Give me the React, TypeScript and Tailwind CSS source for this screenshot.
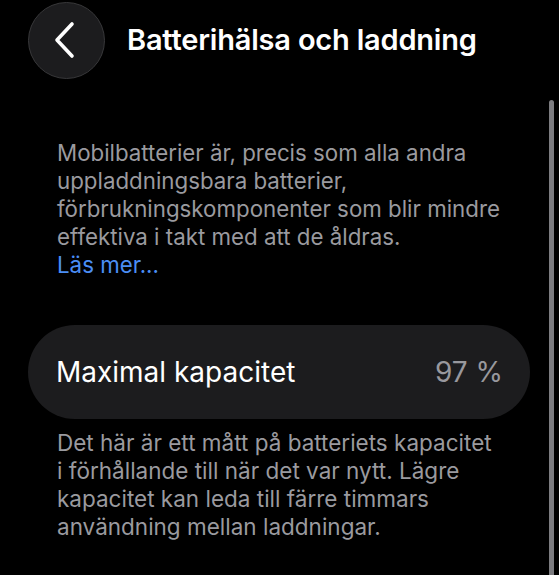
export default function App() {
  return (
    <div
      className="relative h-[575px] w-[559px] overflow-hidden bg-black text-white"
      style={{ fontFamily: 'Inter, "Noto Sans", sans-serif' }}
    >
      {/* header */}
      <div className="flex h-[80px] items-center pl-[28px]">
        <button className="flex h-[77px] w-[77px] items-center justify-center rounded-full border border-[#38383a] bg-[#1c1c1e]">
          <svg width="24" height="38" viewBox="0 0 24 38" fill="none" className="-ml-[4px]">
            <path d="M19 3 L4 19 L19 35" stroke="white" strokeWidth="3.6" strokeLinecap="round" strokeLinejoin="round" />
          </svg>
        </button>
        <h1 className="ml-[22px] text-[29px] font-semibold tracking-[-0.2px]">Batterihälsa och laddning</h1>
      </div>

      {/* scroll indicator */}
      <div className="absolute right-[5px] top-[100px] h-[490px] w-[5px] rounded-full bg-[#7c7c80]" />

      <div className="mt-[59px] whitespace-nowrap px-[57px] text-[22.3px] leading-[28px] text-[#9a9a9f]">
        <p>
          Mobilbatterier är, precis som alla andra
          <br />
          uppladdningsbara batterier,
          <br />
          förbrukningskomponenter som blir mindre
          <br />
          effektiva i takt med att de åldras.
        </p>
        <a className="block text-[#4b8ef5]">Läs mer...</a>
      </div>

      <div className="ml-[28px] mt-[46px] flex h-[94px] w-[502px] items-center justify-between rounded-full bg-[#1c1c1e] pl-[28px] pr-[27px]">
        <span className="text-[28px]">Maximal kapacitet</span>
        <span className="text-[28px] text-[#98989d]">97 %</span>
      </div>

      <p className="mt-[10px] whitespace-nowrap px-[57px] text-[22.5px] leading-[28px] text-[#9a9a9f]">
        Det här är ett mått på batteriets kapacitet
        <br />
        i förhållande till när det var nytt. Lägre
        <br />
        kapacitet kan leda till färre timmars
        <br />
        användning mellan laddningar.
      </p>
    </div>
  );
}
